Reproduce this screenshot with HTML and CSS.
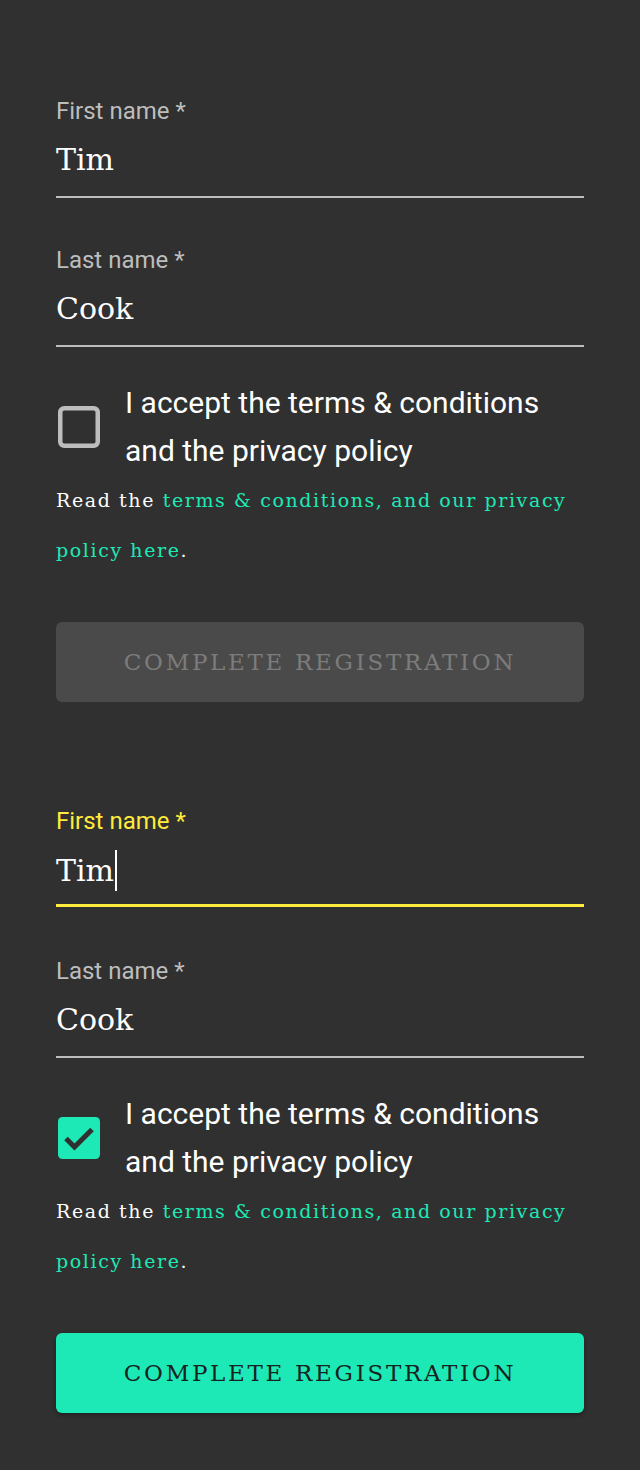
FILE: index.html
```html
<!DOCTYPE html>
<html lang="en">
<head>
<meta charset="utf-8">
<title>Registration</title>
<link rel="stylesheet" href="styles.css">
</head>
<body>
<main class="page">
  <form class="form">
    <div class="field">
      <label class="label">First name *</label>
      <div class="input">Tim</div>
    </div>
    <div class="field">
      <label class="label">Last name *</label>
      <div class="input">Cook</div>
    </div>
    <div class="check-row">
      <span class="checkbox">
        <svg width="42" height="42" viewBox="0 0 42 42"><rect x="2.25" y="2.25" width="37.5" height="37.5" rx="4" fill="none" stroke="#bdbdbd" stroke-width="4.5"/></svg>
      </span>
      <span class="check-text">I accept the terms &amp; conditions<br>and the privacy policy</span>
    </div>
    <p class="read">Read the <a class="link">terms &amp; conditions, and our privacy policy here</a>.</p>
    <button type="button" class="btn btn-disabled">COMPLETE REGISTRATION</button>
  </form>

  <form class="form form-second">
    <div class="field field-focus">
      <label class="label">First name *</label>
      <div class="input">Tim<span class="caret"></span></div>
    </div>
    <div class="field">
      <label class="label">Last name *</label>
      <div class="input">Cook</div>
    </div>
    <div class="check-row">
      <span class="checkbox">
        <svg width="42" height="42" viewBox="0 0 42 42"><rect x="0" y="0" width="42" height="42" rx="4.5" fill="#1de9b6"/><path d="M8 21.5 L16.5 30 L34 12.5" fill="none" stroke="#303030" stroke-width="5"/></svg>
      </span>
      <span class="check-text">I accept the terms &amp; conditions<br>and the privacy policy</span>
    </div>
    <p class="read">Read the <a class="link">terms &amp; conditions, and our privacy policy here</a>.</p>
    <button type="button" class="btn btn-active">COMPLETE REGISTRATION</button>
  </form>
</main>
</body>
</html>
```
FILE: styles.css
```css
html, body {
  margin: 0;
  padding: 0;
  background: #303030;
}
.page {
  padding: 96px 56px 56px;
  box-sizing: border-box;
  min-height: 1470px;
}
.form {
  display: flex;
  flex-direction: column;
}
.form-second {
  margin-top: 104px;
}
.field {
  display: flex;
  flex-direction: column;
}
.field + .field {
  margin-top: 47px;
}
.label {
  font-family: Roboto, "Noto Sans", sans-serif;
  font-size: 24px;
  line-height: 30px;
  color: #bdbdbd;
}
.input {
  font-family: "DejaVu Serif", serif;
  font-size: 30px;
  line-height: 40px;
  color: #ffffff;
  padding: 14px 0 16px;
  border-bottom: 2px solid #bdbdbd;
  display: flex;
  align-items: center;
}
.field-focus {
  margin-bottom: 2px;
}
.field-focus .label {
  color: #ffeb3b;
}
.field-focus .input {
  border-bottom: 3px solid #ffeb3b;
  padding-bottom: 13px;
}
.caret {
  display: inline-block;
  width: 2px;
  height: 41px;
  background: #ffffff;
  margin-left: 1px;
}
.check-row {
  display: flex;
  align-items: center;
  margin-top: 32px;
}
.checkbox {
  display: flex;
  width: 42px;
  height: 42px;
  margin-left: 2px;
  margin-right: 25px;
  flex: none;
}
.check-text {
  font-family: Roboto, "Noto Sans", sans-serif;
  font-size: 30px;
  line-height: 48px;
  color: #ffffff;
  letter-spacing: 0;
}
.read {
  margin: 0;
  font-family: "DejaVu Serif", serif;
  font-size: 19px;
  line-height: 50px;
  color: #ffffff;
  letter-spacing: 1.6px;
}
.link {
  color: #1de9b6;
  text-decoration: none;
}
.btn {
  margin-top: 47px;
  height: 80px;
  border: none;
  border-radius: 6px;
  font-family: "DejaVu Serif", serif;
  font-size: 23px;
  letter-spacing: 2.7px;
  width: 100%;
}
.btn-disabled {
  background: #4a4a4a;
  color: #7c7c7c;
}
.btn-active {
  background: #1de9b6;
  color: #16231f;
  box-shadow: 0 2px 4px rgba(0,0,0,0.35);
}
```
